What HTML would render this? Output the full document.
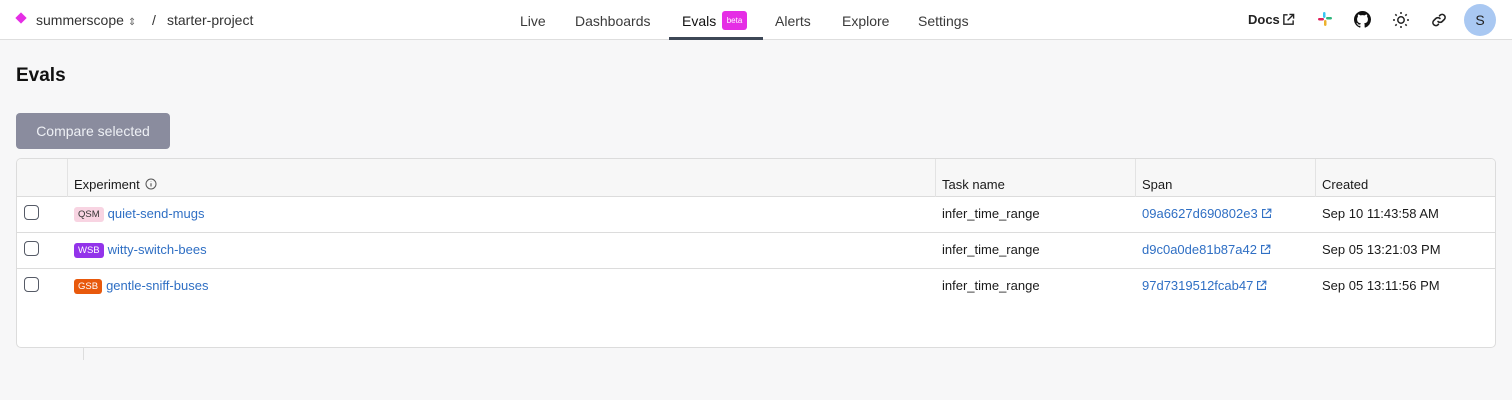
<!DOCTYPE html>
<html><head><meta charset="utf-8"><style>
*{box-sizing:border-box;margin:0;padding:0}
body{width:1512px;height:400px;background:#f7f7f8;font-family:"Liberation Sans",sans-serif;color:#1a1a1a;position:relative;overflow:hidden}
.top{position:absolute;left:0;top:0;width:1512px;height:40px;background:#fff;border-bottom:1px solid #dedede}
.abs{position:absolute}
.nav{font-size:14px;color:#333;top:12px}
.tab{position:absolute;top:13px;font-size:14px;color:#3a3a3a}
.ico{position:absolute;top:10px}
h1{position:absolute;left:16px;top:65px;font-size:19px;font-weight:bold;color:#111}
.btn{position:absolute;left:16px;top:113px;width:154px;height:36px;background:#8a8c9e;border-radius:4px;color:#eef0f5;font-size:14px;line-height:36px;text-align:center}
.tbl{position:absolute;left:16px;top:158px;width:1480px;height:190px;background:#fff;border:1px solid #dcdcdc;border-radius:5px;overflow:hidden}
.hd{position:absolute;left:0;top:0;width:100%;height:38px;background:#f7f7f7;border-bottom:1px solid #dcdcdc}
.sep{position:absolute;top:0;height:38px;border-left:1px solid #e3e3e3}
.row{position:absolute;left:0;width:100%;height:36px;border-bottom:1px solid #dcdcdc}
.t{position:absolute;font-size:13px;white-space:nowrap}
.cb{position:absolute;left:7px;width:15px;height:15px;border:1.5px solid #555a66;border-radius:4px;background:#fff}
.tag{display:inline-block;font-size:9.5px;padding:0 4px;height:15px;line-height:15px;border-radius:3px;margin-right:4px;vertical-align:1px}
.lnk{color:#2f6fc4}
.ext{vertical-align:-1px;margin-left:3px}
</style></head><body>
<div class="top">
  <div class="abs" style="left:17px;top:14px;width:8px;height:8px;background:#e52ee5;transform:rotate(45deg)"></div>
  <div class="nav abs" style="left:36px">summerscope <span style="font-size:10px;color:#666">&#8661;</span></div>
  <div class="nav abs" style="left:152px">/</div>
  <div class="nav abs" style="left:167px">starter-project</div>
  <div class="tab" style="left:520px">Live</div>
  <div class="tab" style="left:575px">Dashboards</div>
  <div class="tab" style="left:682px;color:#111">Evals</div>
  <div class="abs" style="left:722px;top:11px;width:25px;height:19px;background:#e52ee5;border-radius:3px;color:#fff;font-size:8px;line-height:19px;text-align:center">beta</div>
  <div class="abs" style="left:669px;top:37px;width:94px;height:3px;background:#3d4756"></div>
  <div class="tab" style="left:775px">Alerts</div>
  <div class="tab" style="left:842px">Explore</div>
  <div class="tab" style="left:918px">Settings</div>
  <div class="abs" style="left:1248px;top:12px;font-size:13px;font-weight:bold;color:#222">Docs</div>
  <svg class="ico" style="left:1282px;top:13px" width="13" height="13" viewBox="0 0 14 14" fill="none" stroke="#222" stroke-width="1.5"><path d="M6 2H2v10h10V8M8 1.5h4.5V6M12.5 1.5L6 8"/></svg>
  <svg class="ico" style="left:1318px;top:12px" width="14" height="14" viewBox="0 0 14 14"><rect x="5" y="0" width="2.5" height="6" rx="1.2" fill="#36c5f0"/><rect x="0" y="6" width="6" height="2.5" rx="1.2" fill="#e01e5a"/><rect x="8" y="5" width="6" height="2.5" rx="1.2" fill="#2eb67d"/><rect x="6" y="8" width="2.5" height="6" rx="1.2" fill="#ecb22e"/></svg>
  <svg class="ico" style="left:1354px;top:11px" width="17" height="17" viewBox="0 0 16 16"><path fill="#111" d="M8 0C3.58 0 0 3.58 0 8c0 3.54 2.29 6.53 5.47 7.59.4.07.55-.17.55-.38v-1.33c-2.23.48-2.7-1.07-2.7-1.07-.36-.93-.89-1.17-.89-1.17-.73-.5.05-.49.05-.49.8.06 1.23.83 1.23.83.72 1.23 1.88.87 2.34.66.07-.52.28-.87.51-1.07-1.78-.2-3.65-.89-3.65-3.95 0-.87.31-1.59.82-2.15-.08-.2-.36-1.02.08-2.12 0 0 .67-.21 2.2.82A7.6 7.6 0 0 1 8 3.87c.68 0 1.36.09 2 .27 1.53-1.04 2.2-.82 2.2-.82.44 1.1.16 1.92.08 2.12.51.56.82 1.27.82 2.15 0 3.07-1.87 3.75-3.65 3.95.29.25.54.73.54 1.48v2.2c0 .21.15.46.55.38A8 8 0 0 0 16 8c0-4.42-3.58-8-8-8z"/></svg>
  <svg class="ico" style="left:1392px;top:11px" width="18" height="18" viewBox="0 0 18 18" stroke="#222" stroke-width="1.5" fill="none"><circle cx="9" cy="9" r="3.2"/><path d="M9 1v2M9 15v2M1 9h2M15 9h2M3.3 3.3l1.4 1.4M13.3 13.3l1.4 1.4M3.3 14.7l1.4-1.4M13.3 4.7l1.4-1.4"/></svg>
  <svg class="ico" style="left:1431px;top:12px" width="16" height="16" viewBox="0 0 16 16" stroke="#222" stroke-width="1.6" fill="none" stroke-linecap="round"><path d="M7 9.5a3 3 0 0 0 4.2 0l2.3-2.3a3 3 0 0 0-4.2-4.2L8.5 3.8M9 6.5a3 3 0 0 0-4.2 0L2.5 8.8a3 3 0 0 0 4.2 4.2l.8-.8"/></svg>
  <div class="abs" style="left:1464px;top:4px;width:32px;height:32px;border-radius:50%;background:#a9c8f2;color:#222;font-size:14px;text-align:center;line-height:32px">S</div>
</div>
<h1>Evals</h1>
<div class="btn">Compare selected</div>
<div class="tbl">
  <div class="hd">
    <div class="sep" style="left:50px"></div><div class="sep" style="left:918px"></div><div class="sep" style="left:1118px"></div><div class="sep" style="left:1298px"></div>
    <div class="t" style="left:57px;top:18px">Experiment <svg width="12" height="12" viewBox="0 0 12 12" style="vertical-align:-1px;margin-left:2px"><circle cx="6" cy="6" r="5" fill="none" stroke="#555"/><path d="M6 5.2v3.3M6 3.3v.3" stroke="#555" stroke-width="1.1"/></svg></div>
    <div class="t" style="left:925px;top:18px">Task name</div>
    <div class="t" style="left:1125px;top:18px">Span</div>
    <div class="t" style="left:1305px;top:18px">Created</div>
  </div>
  <div class="row" style="top:38px">
    <div class="cb" style="top:8px"></div>
    <div class="t" style="left:57px;top:9px"><span class="tag" style="background:#f8d4e2;color:#333">QSM</span><span class="lnk">quiet-send-mugs</span></div>
    <div class="t" style="left:925px;top:9px">infer_time_range</div>
    <div class="t lnk" style="left:1125px;top:9px">09a6627d690802e3<svg class="ext" width="11" height="11" viewBox="0 0 14 14" fill="none" stroke="#2f6fc4" stroke-width="1.4"><path d="M6 2H2v10h10V8M8 1.5h4.5V6M12.5 1.5L6 8"/></svg></div>
    <div class="t" style="left:1305px;top:9px">Sep 10 11:43:58 AM</div>
  </div>
  <div class="row" style="top:74px">
    <div class="cb" style="top:8px"></div>
    <div class="t" style="left:57px;top:9px"><span class="tag" style="background:#9333ea;color:#fff">WSB</span><span class="lnk">witty-switch-bees</span></div>
    <div class="t" style="left:925px;top:9px">infer_time_range</div>
    <div class="t lnk" style="left:1125px;top:9px">d9c0a0de81b87a42<svg class="ext" width="11" height="11" viewBox="0 0 14 14" fill="none" stroke="#2f6fc4" stroke-width="1.4"><path d="M6 2H2v10h10V8M8 1.5h4.5V6M12.5 1.5L6 8"/></svg></div>
    <div class="t" style="left:1305px;top:9px">Sep 05 13:21:03 PM</div>
  </div>
  <div class="row" style="top:110px;border-bottom:none">
    <div class="cb" style="top:8px"></div>
    <div class="t" style="left:57px;top:9px"><span class="tag" style="background:#e8590c;color:#fff">GSB</span><span class="lnk">gentle-sniff-buses</span></div>
    <div class="t" style="left:925px;top:9px">infer_time_range</div>
    <div class="t lnk" style="left:1125px;top:9px">97d7319512fcab47<svg class="ext" width="11" height="11" viewBox="0 0 14 14" fill="none" stroke="#2f6fc4" stroke-width="1.4"><path d="M6 2H2v10h10V8M8 1.5h4.5V6M12.5 1.5L6 8"/></svg></div>
    <div class="t" style="left:1305px;top:9px">Sep 05 13:11:56 PM</div>
  </div>
</div>
<div class="abs" style="left:83px;top:348px;width:1px;height:12px;background:#ddd"></div>
</body></html>
